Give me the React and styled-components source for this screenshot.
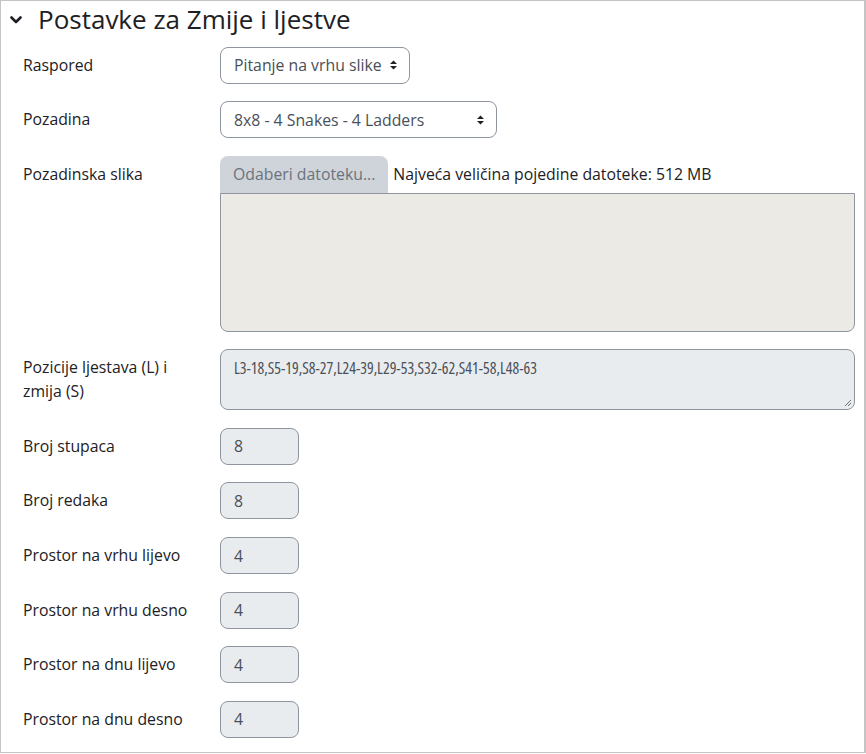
import React from "react";
import styled, { createGlobalStyle } from "styled-components";

const GlobalStyle = createGlobalStyle`
  html, body {
    margin: 0;
    padding: 0;
    background: #fff;
  }
  body {
    font-family: "Open Sans", "Liberation Sans", sans-serif;
    font-size: 15.8px;
    color: #1d2125;
  }
`;

const rows = [
  { label: "Broj stupaca", value: "8" },
  { label: "Broj redaka", value: "8" },
  { label: "Prostor na vrhu lijevo", value: "4" },
  { label: "Prostor na vrhu desno", value: "4" },
  { label: "Prostor na dnu lijevo", value: "4" },
  { label: "Prostor na dnu desno", value: "4" },
];

function Arrows() {
  return (
    <svg width="9" height="12" viewBox="0 0 9 12">
      <path d="M4.5 1.5 L8 5 H1 Z" fill="#1d2125" />
      <path d="M4.5 10.5 L8 7 H1 Z" fill="#1d2125" />
    </svg>
  );
}

function Chevron() {
  return (
    <svg width="12" height="10" viewBox="0 0 12 10">
      <path
        d="M1.5 2.5 L6 7 L10.5 2.5"
        fill="none"
        stroke="#1d2125"
        strokeWidth="2.6"
        strokeLinecap="round"
        strokeLinejoin="round"
      />
    </svg>
  );
}

export default function App() {
  return (
    <>
      <GlobalStyle />
      <Frame>
        <Legend>
          <ChevronWrap>
            <Chevron />
          </ChevronWrap>
          <Title>Postavke za Zmije i ljestve</Title>
        </Legend>
        <Form>
          <Row>
            <Label>Raspored</Label>
            <Select width={190}>
              <span>Pitanje na vrhu slike</span>
              <Arrows />
            </Select>
          </Row>
          <Row>
            <Label>Pozadina</Label>
            <Select width={277}>
              <span>8x8 - 4 Snakes - 4 Ladders</span>
              <Arrows />
            </Select>
          </Row>
          <Row>
            <Label>Pozadinska slika</Label>
            <Control>
              <FileTop>
                <FileButton>Odaberi datoteku...</FileButton>
                <FileHint>Najveća veličina pojedine datoteke: 512 MB</FileHint>
              </FileTop>
              <FileArea />
            </Control>
          </Row>
          <Row>
            <Label>Pozicije ljestava (L) i zmija (S)</Label>
            <Control>
              <TextArea>
                L3-18,S5-19,S8-27,L24-39,L29-53,S32-62,S41-58,L48-63
                <Grip viewBox="0 0 8 8" width="8" height="8">
                  <path d="M7 1 L1 7 M7 4 L4 7" stroke="#6a737b" strokeWidth="1" />
                </Grip>
              </TextArea>
            </Control>
          </Row>
          {rows.map((r) => (
            <Row key={r.label}>
              <Label>{r.label}</Label>
              <NumberInput>{r.value}</NumberInput>
            </Row>
          ))}
        </Form>
      </Frame>
    </>
  );
}

const Frame = styled.div`
  width: 866px;
  height: 753px;
  box-sizing: border-box;
  border: 1px solid #c4c4c4;
  border-right-width: 2px;
  overflow: hidden;
`;

const Legend = styled.div`
  display: flex;
  align-items: center;
  height: 38px;
  padding-left: 9px;
`;

const ChevronWrap = styled.span`
  display: flex;
  width: 28px;
`;

const Title = styled.h3`
  margin: 0;
  font-size: 26px;
  font-weight: 400;
  line-height: 1.2;
  color: #1d2125;
`;

const Form = styled.div`
  display: flex;
  flex-direction: column;
  gap: 17.6px;
  padding: 7.5px 9px 0 22px;
`;

const Row = styled.div`
  display: flex;
  align-items: flex-start;
`;

const Label = styled.div`
  width: 175px;
  flex-shrink: 0;
  padding-right: 22px;
  padding-top: 6px;
  line-height: 24px;
  font-size: 15.8px;
  color: #1d2125;
`;

const Control = styled.div`
  flex: 1;
  display: flex;
  flex-direction: column;
`;

const Select = styled.div`
  box-sizing: border-box;
  width: ${(p) => p.width}px;
  height: 37px;
  display: flex;
  align-items: center;
  justify-content: space-between;
  padding: 0 11px 0 13px;
  border: 1px solid #8f959e;
  border-radius: 8px;
  background: #fff;
  color: #495057;
  font-size: 15.8px;
`;

const FileTop = styled.div`
  display: flex;
  align-items: center;
`;

const FileButton = styled.div`
  box-sizing: border-box;
  height: 37px;
  padding: 0 13px;
  display: flex;
  align-items: center;
  background: #ced4da;
  color: #6a737b;
  border-radius: 8px 8px 0 0;
  font-size: 15.8px;
`;

const FileHint = styled.span`
  margin-left: 5px;
  font-size: 15.8px;
  color: #1d2125;
`;

const FileArea = styled.div`
  box-sizing: border-box;
  height: 139px;
  background: #ebeae4;
  border: 1px solid #8f959e;
  border-radius: 0 0 8px 8px;
`;

const TextArea = styled.div`
  position: relative;
  box-sizing: border-box;
  height: 61px;
  padding: 6px 13px;
  background: #e9ecef;
  border: 1px solid #8f959e;
  border-radius: 8px;
  color: #495057;
  font-size: 15.8px;
  font-stretch: 75%;
  line-height: 24px;
`;

const Grip = styled.svg`
  position: absolute;
  right: 2px;
  bottom: 2px;
`;

const NumberInput = styled.div`
  box-sizing: border-box;
  width: 79px;
  height: 37px;
  display: flex;
  align-items: center;
  padding: 0 13px;
  background: #e9ecef;
  border: 1px solid #8f959e;
  border-radius: 8px;
  color: #495057;
  font-size: 15.8px;
`;
